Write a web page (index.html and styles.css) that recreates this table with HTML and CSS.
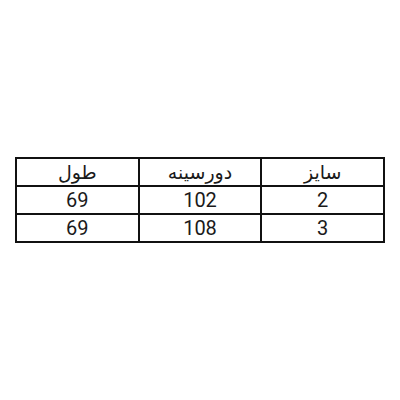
FILE: index.html
```html
<!DOCTYPE html>
<html lang="fa">
<head>
<meta charset="utf-8">
<link rel="stylesheet" href="styles.css">
</head>
<body>
<main class="page">
  <table class="size-table" dir="rtl">
    <tr class="head"><td>سایز</td><td>دورسینه</td><td>طول</td></tr>
    <tr><td>2</td><td>102</td><td>69</td></tr>
    <tr><td>3</td><td>108</td><td>69</td></tr>
  </table>
</main>
</body>
</html>
```
FILE: styles.css
```css
html, body {
  margin: 0;
  padding: 0;
  background: #fff;
}
.page {
  width: 400px;
  height: 400px;
  display: flex;
  align-items: center;
  justify-content: center;
}
.size-table {
  width: 370px;
  border-collapse: collapse;
  border: 2px solid #111;
  font-family: Roboto, "DejaVu Sans", sans-serif;
  font-size: 20px;
  color: #1a1a1a;
  table-layout: fixed;
}
.size-table td {
  border: 2px solid #111;
  padding: 0;
  height: 26px;
  line-height: 26px;
  text-align: center;
}
.size-table .head td {
  font-size: 19px;
  padding-top: 2px;
  height: 24px;
  line-height: 24px;
}
```
